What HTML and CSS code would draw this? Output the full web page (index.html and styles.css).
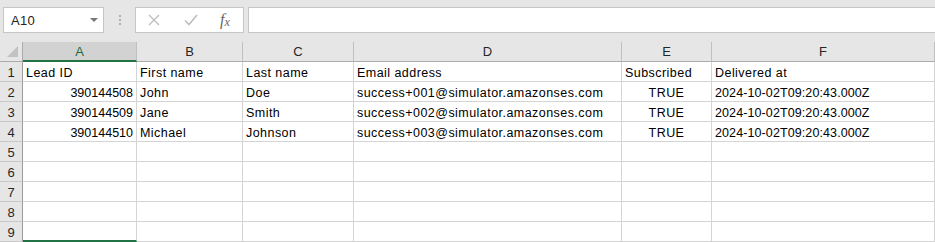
FILE: index.html
```html
<!DOCTYPE html>
<html lang="en">
<head>
    <meta charset="UTF-8">
    <title>Leads sheet</title>
    <link rel="stylesheet" href="styles.css">
</head>
<body>

<div class="toolbar">
    <div class="name-box">
        <span>A10</span>
        <svg class="caret" width="8" height="4" viewBox="0 0 8 4"><path d="M0 0h8L4 4z" fill="#777"/></svg>
    </div>
    <div class="grip"><i></i><i></i><i></i></div>
    <div class="fx-buttons">
        <svg width="12" height="12" viewBox="0 0 12 12"><path d="M1 1l10 10M11 1L1 11" stroke="#bdbdbd" stroke-width="1.3" fill="none"/></svg>
        <svg width="14" height="12" viewBox="0 0 14 12"><path d="M1 6.5l4 4L13 1" stroke="#bdbdbd" stroke-width="1.6" fill="none"/></svg>
        <span class="fx">f<sub>x</sub></span>
    </div>
    <div class="formula-input"></div>
</div>

<div class="sheet" id="sheet">
    <div class="corner"><span class="tri"></span></div>
    <div class="col-head selected">A</div>
    <div class="col-head">B</div>
    <div class="col-head">C</div>
    <div class="col-head">D</div>
    <div class="col-head">E</div>
    <div class="col-head">F</div>
</div>

<script>
    const rows = [
        ['Lead ID', 'First name', 'Last name', 'Email address', 'Subscribed', 'Delivered at'],
        ['390144508', 'John', 'Doe', 'success+001@simulator.amazonses.com', 'TRUE', '2024-10-02T09:20:43.000Z'],
        ['390144509', 'Jane', 'Smith', 'success+002@simulator.amazonses.com', 'TRUE', '2024-10-02T09:20:43.000Z'],
        ['390144510', 'Michael', 'Johnson', 'success+003@simulator.amazonses.com', 'TRUE', '2024-10-02T09:20:43.000Z']
    ];

    const sheet = document.getElementById('sheet');

    for (let r = 1; r <= 9; r++) {
        const head = document.createElement('div');
        head.className = 'row-head';
        head.textContent = r;
        sheet.appendChild(head);

        const data = rows[r - 1] || [];
        for (let c = 0; c < 6; c++) {
            const cell = document.createElement('div');
            cell.className = 'cell';
            if (r > 1 && c === 0) cell.classList.add('num');
            if (r > 1 && c === 4) cell.classList.add('bool');
            if (r > 1 && c === 5) cell.classList.add('date');
            if (r === 9 && c === 0) cell.classList.add('above-active');
            cell.textContent = data[c] || '';
            sheet.appendChild(cell);
        }
    }
</script>

</body>
</html>
```

FILE: styles.css
```css
body {
    margin: 0;
    background: #fff;
    font-family: "Liberation Sans", Arial, sans-serif;
    font-size: 12.5px;
    color: #000;
    overflow: hidden;
}
.toolbar {
    height: 42px;
    background: #e6e6e6;
    display: flex;
    align-items: flex-start;
    padding-top: 7px;
    box-sizing: border-box;
}
.name-box {
    margin-left: 3px;
    width: 101px;
    height: 26px;
    box-sizing: border-box;
    border: 1px solid #c6c6c6;
    background: #fff;
    display: flex;
    align-items: center;
    justify-content: space-between;
    padding: 0 5px 0 7px;
    font-size: 13px;
    letter-spacing: 0.3px;
    color: #222;
}
.grip {
    width: 31px;
    height: 26px;
    display: flex;
    flex-direction: column;
    align-items: center;
    justify-content: center;
    gap: 2px;
}
.grip i {
    width: 2px;
    height: 2px;
    background: #b0b0b0;
}
.fx-buttons {
    width: 109px;
    height: 26px;
    box-sizing: border-box;
    border: 1px solid #c6c6c6;
    background: #fff;
    display: flex;
    align-items: center;
    padding-left: 12px;
    gap: 24px;
}
.fx {
    font-family: "Liberation Serif", serif;
    font-style: italic;
    font-size: 16px;
    color: #666;
    margin-left: -2px;
}
.fx sub {
    font-size: 12px;
    vertical-align: -1px;
}
.formula-input {
    flex: 1;
    margin-left: 4px;
    height: 26px;
    box-sizing: border-box;
    border: 1px solid #c6c6c6;
    border-right: none;
    background: #fff;
}
.sheet {
    display: grid;
    grid-template-columns: 23px 114px 106px 111px 268px 90px 1fr;
    grid-auto-rows: 20px;
}
.corner, .col-head, .row-head, .cell {
    box-sizing: border-box;
    height: 20px;
    white-space: nowrap;
    overflow: hidden;
}
.corner {
    background: #e6e6e6;
    border-right: 1px solid #ababab;
    border-bottom: 1px solid #ababab;
    position: relative;
}
.tri {
    position: absolute;
    right: 4px;
    bottom: 4px;
    width: 0;
    height: 0;
    border-left: 11px solid transparent;
    border-bottom: 11px solid #c2c2c2;
}
.col-head {
    background: #e6e6e6;
    border-right: 1px solid #c0c0c0;
    border-bottom: 1px solid #ababab;
    text-align: center;
    line-height: 19px;
    color: #262626;
    font-size: 13px;
}
.col-head.selected {
    background: #d2d2d2;
    border-bottom: 2px solid #217346;
    color: #1d6b40;
}
.row-head {
    background: #e6e6e6;
    border-right: 1px solid #9b9b9b;
    border-bottom: 1px solid #c8c8c8;
    text-align: center;
    line-height: 20px;
    padding-top: 1px;
    color: #262626;
    font-size: 13px;
}
.cell {
    border-right: 1px solid #d4d4d4;
    border-bottom: 1px solid #d4d4d4;
    padding: 2px 3px 0 3px;
    line-height: 19px;
    letter-spacing: 0.45px;
}
.cell.num {
    text-align: right;
    letter-spacing: 0;
}
.cell.bool {
    text-align: center;
}
.cell.date {
    letter-spacing: 0.1px;
}
.cell.above-active {
    border-bottom: 2px solid #217346;
}
```
